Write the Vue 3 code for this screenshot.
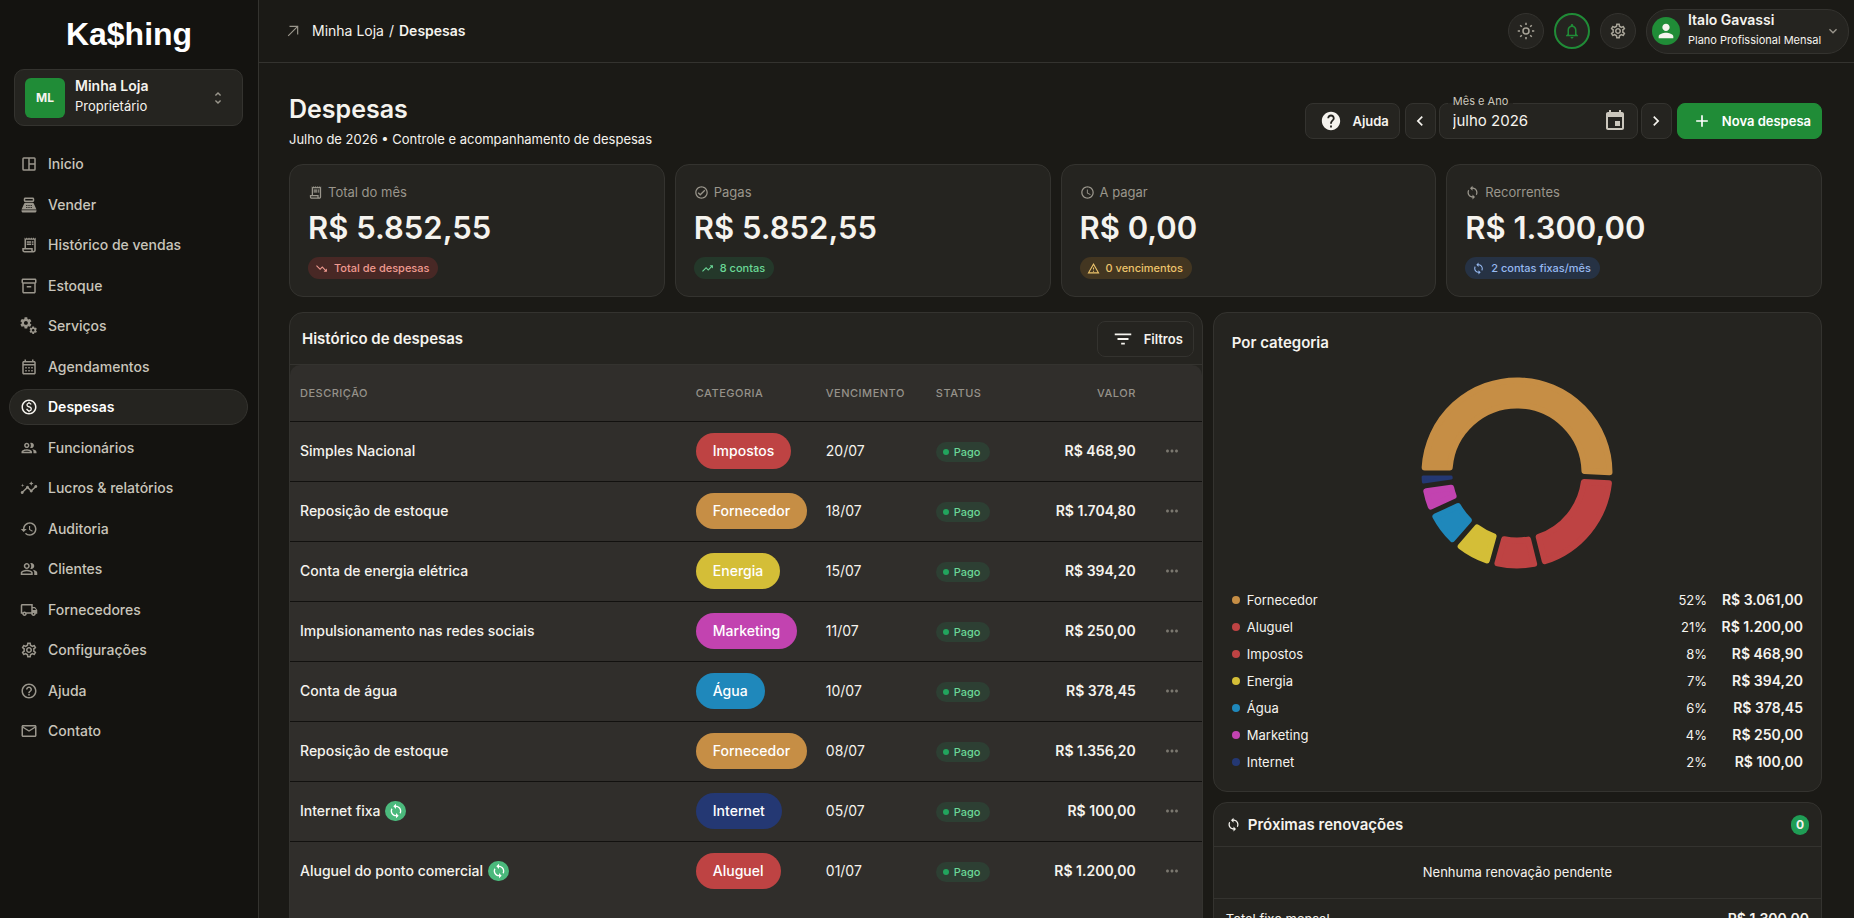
<template>
  <div class="layout">
    <aside class="sidebar">
      <a class="logo" href="#">Ka$hing</a>

      <button class="store" type="button">
        <span class="store-avatar">ML</span>
        <span class="store-info">
          <strong>Minha Loja</strong>
          <span>Proprietário</span>
        </span>
        <Icon name="unfold" :size="16" class="muted" />
      </button>

      <nav class="menu">
        <a
          v-for="item in menu"
          :key="item.label"
          href="#"
          class="menu-item"
          :class="{ active: item.active }"
        >
          <Icon :name="item.icon" :size="18" />
          <span>{{ item.label }}</span>
        </a>
      </nav>
    </aside>

    <div class="main">
      <header class="topbar">
        <div class="breadcrumb">
          <Icon name="arrow" :size="14" class="muted" />
          <div class="crumbs">
            <a href="#">Minha Loja</a>
            <span>/</span>
            <strong>Despesas</strong>
          </div>
        </div>

        <div class="topbar-actions">
          <button class="round" type="button" aria-label="Tema"><Icon name="sun" :size="18" /></button>
          <button class="round notify" type="button" aria-label="Notificações"><Icon name="bell" :size="18" /></button>
          <button class="round" type="button" aria-label="Configurações"><Icon name="gear" :size="18" /></button>
          <button class="user" type="button">
            <span class="user-avatar"><Icon name="person" :size="22" /></span>
            <span class="user-info">
              <strong>Italo Gavassi</strong>
              <span>Plano Profissional Mensal</span>
            </span>
            <Icon name="down" :size="16" class="muted" />
          </button>
        </div>
      </header>

      <main class="content">
        <section class="page-head">
          <div>
            <h1>Despesas</h1>
            <p>Julho de 2026 • Controle e acompanhamento de despesas</p>
          </div>

          <div class="toolbar">
            <button class="btn" type="button">
              <Icon name="helpFilled" :size="22" />
              Ajuda
            </button>
            <div class="month">
              <button class="btn step" type="button" aria-label="Mês anterior"><Icon name="left" :size="20" /></button>
              <div class="month-field">
                <label for="month">Mês e Ano</label>
                <input id="month" v-model="month" type="text" />
                <Icon name="event" :size="24" />
              </div>
              <button class="btn step" type="button" aria-label="Próximo mês"><Icon name="right" :size="20" /></button>
            </div>
            <button class="btn primary" type="button">
              <Icon name="add" :size="20" />
              Nova despesa
            </button>
          </div>
        </section>

        <section class="stats">
          <article v-for="stat in stats" :key="stat.label" class="card stat">
            <div class="stat-label">
              <Icon :name="stat.icon" :size="15" />
              <span>{{ stat.label }}</span>
            </div>
            <div class="stat-value">{{ stat.value }}</div>
            <span class="badge" :class="stat.tone">
              <Icon :name="stat.badgeIcon" :size="13" />
              {{ stat.badge }}
            </span>
          </article>
        </section>

        <section class="columns">
          <div class="card history">
            <div class="card-head">
              <h2>Histórico de despesas</h2>
              <button class="btn filter" type="button">
                <Icon name="filter" :size="22" />
                Filtros
              </button>
            </div>

            <div class="table-wrap">
              <table>
                <colgroup>
                  <col />
                  <col class="col-category" />
                  <col class="col-due" />
                  <col class="col-status" />
                  <col class="col-value" />
                  <col class="col-menu" />
                </colgroup>
                <thead>
                  <tr>
                    <th>Descrição</th>
                    <th>Categoria</th>
                    <th>Vencimento</th>
                    <th>Status</th>
                    <th class="right">Valor</th>
                    <th></th>
                  </tr>
                </thead>
                <tbody>
                  <tr v-for="(row, i) in expenses" :key="i">
                    <td>
                      <div class="desc">
                        {{ row.name }}
                        <span v-if="row.fixed" class="fixed"><Icon name="sync" :size="16" /></span>
                      </div>
                    </td>
                    <td><span class="chip" :style="{ background: colors[row.category] }">{{ row.category }}</span></td>
                    <td class="due">{{ row.due }}</td>
                    <td><span class="status"><i></i>Pago</span></td>
                    <td class="right value">{{ row.value }}</td>
                    <td class="menu-cell">
                      <button class="more" type="button" aria-label="Ações"><Icon name="more" :size="18" /></button>
                    </td>
                  </tr>
                </tbody>
              </table>
            </div>
          </div>

          <div class="side">
            <div class="card categories">
              <h2>Por categoria</h2>
              <svg class="donut" viewBox="0 0 200 200" aria-hidden="true">
                <path
                  v-for="slice in slices"
                  :key="slice.name"
                  :d="slice.d"
                  :fill="slice.color"
                  :stroke="slice.color"
                  :stroke-width="slice.corner * 2"
                  stroke-linejoin="round"
                />
              </svg>
              <ul class="legend">
                <li v-for="cat in categories" :key="cat.name">
                  <i :style="{ background: colors[cat.name] }"></i>
                  <span class="legend-name">{{ cat.name }}</span>
                  <span>{{ cat.percent }}</span>
                  <strong>{{ cat.value }}</strong>
                </li>
              </ul>
            </div>

            <div class="card renewals">
              <div class="renewals-head">
                <Icon name="sync" :size="15" />
                <h2>Próximas renovações</h2>
                <span class="count">0</span>
              </div>
              <p class="empty">Nenhuma renovação pendente</p>
              <div class="renewals-total">
                <span>Total fixo mensal</span>
                <strong>R$ 1.300,00</strong>
              </div>
            </div>
          </div>
        </section>
      </main>
    </div>
  </div>
</template>

<script setup>
import { computed, h, ref } from 'vue';

const gearOuter = 'M19.43 12.98c.04-.32.07-.64.07-.98 0-.34-.03-.66-.07-.98l2.11-1.65c.19-.15.24-.42.12-.64l-2-3.46c-.09-.16-.26-.25-.44-.25-.06 0-.12.01-.17.03l-2.49 1c-.52-.4-1.08-.73-1.69-.98l-.38-2.65C14.46 2.18 14.25 2 14 2h-4c-.25 0-.46.18-.49.42l-.38 2.65c-.61.25-1.17.59-1.69.98l-2.49-1c-.06-.02-.12-.03-.18-.03-.17 0-.34.09-.43.25l-2 3.46c-.13.22-.07.49.12.64l2.11 1.65c-.04.32-.07.65-.07.98 0 .33.03.66.07.98l-2.11 1.65c-.19.15-.24.42-.12.64l2 3.46c.09.16.26.25.44.25.06 0 .12-.01.17-.03l2.49-1c.52.4 1.08.73 1.69.98l.38 2.65c.03.24.24.42.49.42h4c.25 0 .46-.18.49-.42l.38-2.65c.61-.25 1.17-.59 1.69-.98l2.49 1c.06.02.12.03.18.03.17 0 .34-.09.43-.25l2-3.46c.12-.22.07-.49-.12-.64l-2.11-1.65z';
const gearSolid = gearOuter + 'M12 15.5c-1.93 0-3.5-1.57-3.5-3.5s1.57-3.5 3.5-3.5 3.5 1.57 3.5 3.5-1.57 3.5-3.5 3.5z';
const ring = 'M12 2C6.48 2 2 6.48 2 12s4.48 10 10 10 10-4.48 10-10S17.52 2 12 2zm0 18c-4.41 0-8-3.59-8-8s3.59-8 8-8 8 3.59 8 8-3.59 8-8 8z';

const icons = {
  dashboard: 'M5 3h14a2 2 0 0 1 2 2v14a2 2 0 0 1-2 2H5a2 2 0 0 1-2-2V5a2 2 0 0 1 2-2zM5 5v14h6V5zM13 5v6h6V5zM13 13v6h6v-6z',
  register: 'M17 2H7c-1.1 0-2 .9-2 2v2c0 1.1.9 2 2 2h10c1.1 0 2-.9 2-2V4c0-1.1-.9-2-2-2zm0 4H7V4h10v2zm3 16H4c-1.1 0-2-.9-2-2v-1h20v1c0 1.1-.9 2-2 2zm-1.47-11.81C18.21 9.47 17.49 9 16.7 9H7.3c-.79 0-1.51.47-1.83 1.19L2 18h20l-3.47-7.81zM8 12h2v1H8zM11 12h2v1h-2zM14 12h2v1h-2zM8 15h2v1H8zM11 15h2v1h-2zM14 15h2v1h-2z',
  receipt: 'M19.5 3.5 18 2l-1.5 1.5L15 2l-1.5 1.5L12 2l-1.5 1.5L9 2 7.5 3.5 6 2v14H3v3c0 1.66 1.34 3 3 3h12c1.66 0 3-1.34 3-3V2l-1.5 1.5zM15 20H6c-.55 0-1-.45-1-1v-1h10v2zm4-1c0 .55-.45 1-1 1s-1-.45-1-1v-3H8V5h11v14zM9 7h6v2H9zM16 7h2v2h-2zM9 10h6v2H9zM16 10h2v2h-2z',
  box: 'M20 2H4c-1 0-2 .9-2 2v3.01c0 .72.43 1.34 1 1.69V20c0 1.1 1.1 2 2 2h14c.9 0 2-.9 2-2V8.7c.57-.35 1-.97 1-1.69V4c0-1.1-1-2-2-2zm-1 18H5V9h14v11zm1-13H4V4h16v3zM9 12h6v2H9z',
  services: [
    [gearSolid, 'translate(-1 -1) scale(.74)'],
    [gearSolid, 'translate(11.6 11.6) scale(.5)']
  ],
  calendar: 'M19 4h-1V2h-2v2H8V2H6v2H5c-1.11 0-1.99.9-1.99 2L3 20c0 1.1.89 2 2 2h14c1.1 0 2-.9 2-2V6c0-1.1-.9-2-2-2zm0 16H5V10h14v10zm0-12H5V6h14v2zM7 12h2v2H7zM11 12h2v2h-2zM15 12h2v2h-2zM7 16h2v2H7zM11 16h2v2h-2zM15 16h2v2h-2z',
  money: ring + 'M12.89 11.1c-1.78-.59-2.64-.96-2.64-1.9 0-1.02 1.11-1.39 1.81-1.39 1.31 0 1.79.99 1.9 1.34l1.58-.67c-.15-.44-.82-1.91-2.66-2.23V5h-1.75v1.26c-2.6.56-2.62 2.85-2.62 2.96 0 2.27 2.25 2.91 3.35 3.31 1.58.56 2.28 1.07 2.28 2.03 0 1.13-1.05 1.61-1.98 1.61-1.82 0-2.34-1.87-2.4-2.09l-1.66.67c.63 2.19 2.28 2.78 3.02 2.96V19h1.75v-1.24c.52-.09 3.02-.59 3.02-3.22.01-1.39-.6-2.61-3-3.44z',
  staff: 'M9 13.75c-2.34 0-7 1.17-7 3.5V19h14v-1.75c0-2.33-4.66-3.5-7-3.5zM4.34 17c.84-.58 2.87-1.25 4.66-1.25s3.82.67 4.66 1.25H4.34zM9 12c1.93 0 3.5-1.57 3.5-3.5S10.93 5 9 5 5.5 6.57 5.5 8.5 7.07 12 9 12zm0-5c.83 0 1.5.67 1.5 1.5S9.83 10 9 10s-1.5-.67-1.5-1.5S8.17 7 9 7zm7.04 6.81c1.16.84 1.96 1.96 1.96 3.44V19h4v-1.75c0-2.02-3.5-3.17-5.96-3.44zM15 12c1.93 0 3.5-1.57 3.5-3.5S16.93 5 15 5c-.54 0-1.04.13-1.5.35.63.89 1 1.98 1 3.15s-.37 2.26-1 3.15c.46.22.96.35 1.5.35z',
  insights: 'M21 8c-1.45 0-2.26 1.44-1.93 2.51l-3.55 3.56c-.3-.09-.74-.09-1.04 0l-2.55-2.55C12.27 10.45 11.46 9 10 9c-1.45 0-2.27 1.44-1.93 2.52l-4.56 4.55C2.44 15.74 1 16.55 1 18c0 1.1.9 2 2 2 1.45 0 2.26-1.44 1.93-2.51l4.55-4.56c.3.09.74.09 1.04 0l2.55 2.55C12.73 16.55 13.54 18 15 18c1.45 0 2.27-1.44 1.93-2.52l3.56-3.55C21.56 12.26 23 11.45 23 10c0-1.1-.9-2-2-2zM15 9l.94-2.07L18 6l-2.06-.93L15 3l-.92 2.07L12 6l2.08.93zM3.5 11 4 9l2-.5L4 8l-.5-2L3 8l-2 .5L3 9z',
  history: 'M13 3c-4.97 0-9 4.03-9 9H1l3.89 3.89.07.14L9 12H6c0-3.87 3.13-7 7-7s7 3.13 7 7-3.13 7-7 7c-1.93 0-3.68-.79-4.94-2.06l-1.42 1.42C8.27 19.99 10.51 21 13 21c4.97 0 9-4.03 9-9s-4.03-9-9-9zm-1 5v5l4.28 2.54.72-1.21-3.5-2.08V8H12z',
  people: 'M16.67 13.13C18.04 14.06 19 15.32 19 17v3h4v-3c0-2.18-3.57-3.47-6.33-3.87zM15 12c2.21 0 4-1.79 4-4s-1.79-4-4-4c-.47 0-.91.1-1.33.24C14.5 5.27 15 6.58 15 8s-.5 2.73-1.33 3.76c.42.14.86.24 1.33.24zM9 12c2.21 0 4-1.79 4-4s-1.79-4-4-4-4 1.79-4 4 1.79 4 4 4zm0-6c1.1 0 2 .9 2 2s-.9 2-2 2-2-.9-2-2 .9-2 2-2zm0 7c-2.67 0-8 1.34-8 4v3h16v-3c0-2.66-5.33-4-8-4zm6 5H3v-.99C3.2 16.29 6.3 15 9 15s5.8 1.29 6 2v1z',
  truck: 'M20 8h-3V4H3c-1.1 0-2 .9-2 2v11h2c0 1.66 1.34 3 3 3s3-1.34 3-3h6c0 1.66 1.34 3 3 3s3-1.34 3-3h2v-5l-3-4zm-.5 1.5 1.96 2.5H17V9.5h2.5zM6 18c-.55 0-1-.45-1-1s.45-1 1-1 1 .45 1 1-.45 1-1 1zm2.22-3c-.55-.61-1.33-1-2.22-1s-1.67.39-2.22 1H3V6h12v9H8.22zM18 18c-.55 0-1-.45-1-1s.45-1 1-1 1 .45 1 1-.45 1-1 1z',
  gear: gearOuter + 'M17.45 11.27c.04.31.05.52.05.73 0 .21-.02.43-.05.73l-.14 1.13.89.7 1.08.84-.7 1.21-1.27-.51-1.04-.42-.9.68c-.43.32-.84.56-1.25.73l-1.06.43-.16 1.13-.2 1.35h-1.4l-.19-1.35-.16-1.13-1.06-.43c-.43-.18-.83-.41-1.23-.71l-.91-.7-1.06.43-1.27.51-.7-1.21 1.08-.84.89-.7-.14-1.13c-.03-.31-.05-.54-.05-.74s.02-.43.05-.73l.14-1.13-.89-.7-1.08-.84.7-1.21 1.27.51 1.04.42.9-.68c.43-.32.84-.56 1.25-.73l1.06-.43.16-1.13.2-1.35h1.39l.19 1.35.16 1.13 1.06.43c.43.18.83.41 1.23.71l.91.7 1.06-.43 1.27-.51.7 1.21-1.07.85-.89.7.14 1.13zM12 8c-2.21 0-4 1.79-4 4s1.79 4 4 4 4-1.79 4-4-1.79-4-4-4zm0 6c-1.1 0-2-.9-2-2s.9-2 2-2 2 .9 2 2-.9 2-2 2z',
  help: ring + 'M11 18h2v-2h-2v2zM12 6c-2.21 0-4 1.79-4 4h2c0-1.1.9-2 2-2s2 .9 2 2c0 2-3 1.75-3 5h2c0-2.25 3-2.5 3-5 0-2.21-1.79-4-4-4z',
  mail: 'M20 4H4c-1.1 0-2 .9-2 2v12c0 1.1.9 2 2 2h16c1.1 0 2-.9 2-2V6c0-1.1-.9-2-2-2zm0 14H4V8l8 5 8-5v10zm-8-7L4 6h16l-8 5z',
  arrow: 'M6 3v2h11.6L3 19.6 4.4 21 19 6.4V18h2V3z',
  sun: 'M12 7a5 5 0 1 0 0 10 5 5 0 0 0 0-10zM12 9a3 3 0 1 1 0 6 3 3 0 0 1 0-6zM11 1h2v3h-2zM11 20h2v3h-2zM1 11h3v2H1zM20 11h3v2h-3zM5 3.6 7.1 5.7 5.7 7.1 3.6 5zM19 3.6 20.4 5l-2.1 2.1-1.4-1.4zM5.7 16.9l1.4 1.4L5 20.4 3.6 19zM18.3 16.9l2.1 2.1-1.4 1.4-2.1-2.1z',
  bell: 'M12 22c1.1 0 2-.9 2-2h-4c0 1.1.9 2 2 2zm6-6v-5c0-3.07-1.63-5.64-4.5-6.32V4c0-.83-.67-1.5-1.5-1.5s-1.5.67-1.5 1.5v.68C7.64 5.36 6 7.92 6 11v5l-2 2v1h16v-1l-2-2zm-2 1H8v-6c0-2.48 1.51-4.5 4-4.5s4 2.02 4 4.5v6z',
  person: 'M12 12c2.21 0 4-1.79 4-4s-1.79-4-4-4-4 1.79-4 4 1.79 4 4 4zm0 2c-2.67 0-8 1.34-8 4v2h16v-2c0-2.66-5.33-4-8-4z',
  down: 'M16.59 8.59 12 13.17 7.41 8.59 6 10l6 6 6-6z',
  unfold: 'M12 5.83 15.17 9l1.41-1.41L12 3 7.41 7.59 8.83 9 12 5.83zm0 12.34L8.83 15l-1.41 1.41L12 21l4.59-4.59L15.17 15 12 18.17z',
  sync: 'M12 4V1L8 5l4 4V6c3.31 0 6 2.69 6 6 0 1.01-.25 1.97-.7 2.8l1.46 1.46C19.54 15.03 20 13.57 20 12c0-4.42-3.58-8-8-8zm0 14c-3.31 0-6-2.69-6-6 0-1.01.25-1.97.7-2.8L5.24 7.74C4.46 8.97 4 10.43 4 12c0 4.42 3.58 8 8 8v3l4-4-4-4v3z',
  event: 'M17 12h-5v5h5v-5zM16 1v2H8V1H6v2H5c-1.11 0-1.99.9-1.99 2L3 19c0 1.1.89 2 2 2h14c1.1 0 2-.9 2-2V5c0-1.1-.9-2-2-2h-1V1h-2zm3 18H5V8h14v11z',
  add: 'M19 13h-6v6h-2v-6H5v-2h6V5h2v6h6v2z',
  filter: 'M10 18h4v-2h-4v2zM3 6v2h18V6H3zm3 7h12v-2H6v2z',
  more: 'M6 10c-1.1 0-2 .9-2 2s.9 2 2 2 2-.9 2-2-.9-2-2-2zm12 0c-1.1 0-2 .9-2 2s.9 2 2 2 2-.9 2-2-.9-2-2-2zm-6 0c-1.1 0-2 .9-2 2s.9 2 2 2 2-.9 2-2-.9-2-2-2z',
  trendUp: 'M16 6l2.29 2.29-4.88 4.88-4-4L2 16.59 3.41 18l6-6 4 4 6.3-6.29L22 12V6z',
  trendDown: 'M16 18l2.29-2.29-4.88-4.88-4 4L2 7.41 3.41 6l6 6 4-4 6.3 6.29L22 12v6z',
  check: ring + 'M16.59 7.58 10 14.17l-2.59-2.58L6 13l4 4 8-8z',
  clock: ring + 'M12.5 7H11v6l5.25 3.15.75-1.23-4.5-2.67z',
  warning: 'M12 2 1 21h22zM12 6l7.5 13h-15zM11 16h2v2h-2zM11 10h2v4h-2z',
  helpFilled: 'M12 2C6.48 2 2 6.48 2 12s4.48 10 10 10 10-4.48 10-10S17.52 2 12 2zm1 17h-2v-2h2v2zm2.07-7.75-.9.92C13.45 12.9 13 13.5 13 15h-2v-.5c0-1.1.45-2.1 1.17-2.83l1.24-1.26c.37-.36.59-.86.59-1.41 0-1.1-.9-2-2-2s-2 .9-2 2H8c0-2.21 1.79-4 4-4s4 1.79 4 4c0 .88-.36 1.68-.93 2.25z',
  left: 'M15.41 7.41 14 6l-6 6 6 6 1.41-1.41L10.83 12z',
  right: 'M10 6 8.59 7.41 13.17 12l-4.58 4.59L10 18l6-6z'
};

const Icon = ({ name, size }) => {
  const shapes = Array.isArray(icons[name]) ? icons[name] : [[icons[name]]];
  return h(
    'svg',
    { class: 'icon', width: size, height: size, viewBox: '0 0 24 24', fill: 'currentColor', 'fill-rule': 'evenodd', 'aria-hidden': 'true' },
    shapes.map(([d, transform]) => h('path', { d, transform }))
  );
};
Icon.props = ['name', 'size'];

const month = ref('julho 2026');

const menu = [
  { label: 'Inicio', icon: 'dashboard' },
  { label: 'Vender', icon: 'register' },
  { label: 'Histórico de vendas', icon: 'receipt' },
  { label: 'Estoque', icon: 'box' },
  { label: 'Serviços', icon: 'services' },
  { label: 'Agendamentos', icon: 'calendar' },
  { label: 'Despesas', icon: 'money', active: true },
  { label: 'Funcionários', icon: 'staff' },
  { label: 'Lucros & relatórios', icon: 'insights' },
  { label: 'Auditoria', icon: 'history' },
  { label: 'Clientes', icon: 'people' },
  { label: 'Fornecedores', icon: 'truck' },
  { label: 'Configurações', icon: 'gear' },
  { label: 'Ajuda', icon: 'help' },
  { label: 'Contato', icon: 'mail' }
];

const stats = [
  { label: 'Total do mês', icon: 'receipt', value: 'R$ 5.852,55', badge: 'Total de despesas', badgeIcon: 'trendDown', tone: 'red' },
  { label: 'Pagas', icon: 'check', value: 'R$ 5.852,55', badge: '8 contas', badgeIcon: 'trendUp', tone: 'green' },
  { label: 'A pagar', icon: 'clock', value: 'R$ 0,00', badge: '0 vencimentos', badgeIcon: 'warning', tone: 'amber' },
  { label: 'Recorrentes', icon: 'sync', value: 'R$ 1.300,00', badge: '2 contas fixas/mês', badgeIcon: 'sync', tone: 'blue' }
];

const colors = {
  Fornecedor: '#c68e45',
  Aluguel: '#be4343',
  Impostos: '#be4343',
  Energia: '#d4be37',
  'Água': '#1f88bb',
  Marketing: '#c243b0',
  Internet: '#243873'
};

const expenses = [
  { name: 'Simples Nacional', category: 'Impostos', due: '20/07', value: 'R$ 468,90' },
  { name: 'Reposição de estoque', category: 'Fornecedor', due: '18/07', value: 'R$ 1.704,80' },
  { name: 'Conta de energia elétrica', category: 'Energia', due: '15/07', value: 'R$ 394,20' },
  { name: 'Impulsionamento nas redes sociais', category: 'Marketing', due: '11/07', value: 'R$ 250,00' },
  { name: 'Conta de água', category: 'Água', due: '10/07', value: 'R$ 378,45' },
  { name: 'Reposição de estoque', category: 'Fornecedor', due: '08/07', value: 'R$ 1.356,20' },
  { name: 'Internet fixa', category: 'Internet', due: '05/07', value: 'R$ 100,00', fixed: true },
  { name: 'Aluguel do ponto comercial', category: 'Aluguel', due: '01/07', value: 'R$ 1.200,00', fixed: true }
];

const categories = [
  { name: 'Fornecedor', total: 3061, percent: '52%', value: 'R$ 3.061,00' },
  { name: 'Aluguel', total: 1200, percent: '21%', value: 'R$ 1.200,00' },
  { name: 'Impostos', total: 468.9, percent: '8%', value: 'R$ 468,90' },
  { name: 'Energia', total: 394.2, percent: '7%', value: 'R$ 394,20' },
  { name: 'Água', total: 378.45, percent: '6%', value: 'R$ 378,45' },
  { name: 'Marketing', total: 250, percent: '4%', value: 'R$ 250,00' },
  { name: 'Internet', total: 100, percent: '2%', value: 'R$ 100,00' }
];

// Donut starts at 9 o'clock and runs clockwise, slices are split by parallel gaps
const slices = computed(() => {
  const outer = 95.5;
  const inner = 64.5;
  const halfGap = 2.5;
  const pad = (2 * Math.PI) / 180;
  const sum = categories.reduce((acc, c) => acc + c.total, 0);
  const free = Math.PI * 2 - pad * categories.length;
  const point = (r, a) => `${(100 + r * Math.cos(a)).toFixed(2)} ${(100 + r * Math.sin(a)).toFixed(2)}`;
  let start = Math.PI;

  return categories.map((c) => {
    const sweep = (c.total / sum) * free + pad;
    const end = start + sweep;
    const corner = sweep < 0.2 ? 1.5 : 3;
    const ro = outer - corner;
    const ri = inner + corner;
    const oo = Math.asin((halfGap + corner) / ro);
    const oi = Math.asin((halfGap + corner) / ri);
    const large = sweep - oo * 2 > Math.PI ? 1 : 0;
    const largeIn = sweep - oi * 2 > Math.PI ? 1 : 0;
    const d = `M${point(ro, start + oo)}A${ro} ${ro} 0 ${large} 1 ${point(ro, end - oo)}L${point(ri, end - oi)}A${ri} ${ri} 0 ${largeIn} 0 ${point(ri, start + oi)}Z`;
    start = end;
    return { name: c.name, color: colors[c.name], d, corner };
  });
});
</script>

<style>
body {
  margin: 0;
  background: #1b1a16;
}
</style>

<style scoped>
* {
  box-sizing: border-box;
}

.layout {
  display: flex;
  height: 100vh;
  overflow: hidden;
  background: #1b1a16;
  color: #f5f3ee;
  font-family: Inter, "Liberation Sans", sans-serif;
  font-size: 14px;
  line-height: 20px;
}

button,
input {
  font: inherit;
  color: inherit;
}

button {
  cursor: pointer;
}

a {
  color: inherit;
  text-decoration: none;
}

h1,
h2,
p,
ul {
  margin: 0;
  padding: 0;
}

strong,
h2 {
  font-weight: 600;
}

.icon {
  display: block;
  flex-shrink: 0;
}

.muted {
  color: #9a968c;
}

/* sidebar */
.sidebar {
  flex: 0 0 259px;
  border-right: 1px solid #34332f;
  background: #141310;
}

.logo {
  display: block;
  padding: 14px 0 15px;
  color: #fff;
  font-family: "Liberation Sans", sans-serif;
  font-size: 32px;
  font-weight: 700;
  line-height: 40px;
  text-align: center;
}

.store {
  display: flex;
  align-items: center;
  gap: 10px;
  width: 229px;
  height: 57px;
  margin: 0 14px;
  padding: 0 16px 0 10px;
  border: 1px solid #34332f;
  border-radius: 10px;
  background: #252420;
  text-align: left;
}

.store-avatar {
  display: grid;
  place-items: center;
  width: 40px;
  height: 40px;
  border-radius: 6px;
  background: #208c37;
  font-size: 12px;
  font-weight: 700;
}

.store-info {
  display: flex;
  flex: 1;
  flex-direction: column;
  padding-bottom: 3px;
  font-size: 13px;
}

.store-info strong {
  font-size: 14px;
}

.menu {
  display: flex;
  flex-direction: column;
  justify-content: space-between;
  height: 603px;
  margin: 20px 10px 0 9px;
}

.menu-item {
  display: flex;
  align-items: center;
  gap: 10px;
  height: 36px;
  padding: 0 10px;
  border: 1px solid transparent;
  border-radius: 18px;
  color: #c9c5bb;
  font-weight: 500;
}

.menu-item .icon {
  color: #9a968c;
}

.menu-item.active {
  border-color: #34332f;
  background: #252420;
  color: #fff;
  font-weight: 600;
}

.menu-item.active .icon {
  color: #f5f3ee;
}

/* topbar */
.main {
  flex: 1;
  min-width: 0;
}

.topbar {
  display: flex;
  align-items: center;
  justify-content: space-between;
  height: 63px;
  padding: 0 5px 0 27px;
  border-bottom: 1px solid #34332f;
}

.breadcrumb {
  display: flex;
  align-items: center;
  gap: 12px;
}

.crumbs {
  display: flex;
  gap: 5px;
}

.topbar-actions {
  display: flex;
  align-items: center;
  gap: 10px;
}

.round {
  display: grid;
  place-items: center;
  width: 36px;
  height: 36px;
  padding: 0;
  border: 1px solid #34332f;
  border-radius: 50%;
  background: #252420;
  color: #a8a498;
}

.notify {
  border: 2px solid #208c37;
  color: #208c37;
}

.user {
  display: flex;
  align-items: center;
  gap: 8px;
  width: 203px;
  height: 45px;
  padding: 0 7px 0 5px;
  border: 1px solid #34332f;
  border-radius: 22px;
  background: #252420;
  text-align: left;
  white-space: nowrap;
}

.user-avatar {
  display: grid;
  flex-shrink: 0;
  place-items: center;
  width: 28px;
  height: 28px;
  border-radius: 50%;
  background: #208c37;
}

.user-info {
  display: flex;
  flex: 1;
  flex-direction: column;
  min-width: 0;
  padding-bottom: 3px;
  font-size: 11px;
}

.user-info strong {
  font-size: 14px;
}

/* page head */
.content {
  padding: 31px 32px 0 30px;
}

.page-head {
  display: flex;
  align-items: flex-start;
  justify-content: space-between;
}

h1 {
  font-size: 25px;
  font-weight: 600;
  line-height: 30px;
}

.page-head p {
  padding: 5px 0 15px;
  font-size: 13px;
}

.toolbar {
  display: flex;
  gap: 5px;
  padding-top: 9px;
}

.month {
  display: flex;
  gap: 3px;
}

.btn {
  display: flex;
  align-items: center;
  gap: 10px;
  height: 36px;
  padding: 0 10px 0 14px;
  border: 1px solid #34332f;
  border-radius: 8px;
  background: #252420;
  font-size: 13px;
  font-weight: 600;
  white-space: nowrap;
}

.btn.step {
  justify-content: center;
  width: 31px;
  padding: 0;
}

.btn.primary {
  border-color: #208c37;
  background: #208c37;
  color: #fff;
}

.month-field {
  position: relative;
  display: flex;
  align-items: center;
  width: 199px;
  height: 36px;
  padding: 0 10px 0 13px;
  border: 1px solid #34332f;
  border-radius: 8px;
  background: #252420;
  color: #cbc7bd;
}

.month-field label {
  position: absolute;
  top: -11px;
  left: 8px;
  padding: 0 5px;
  background: linear-gradient(#1b1a16 60%, #252420 60%);
  font-size: 11px;
  line-height: 16px;
}

.month-field input {
  flex: 1;
  min-width: 0;
  padding: 0;
  border: 0;
  outline: 0;
  background: none;
  color: #f5f3ee;
  font-size: 15px;
}

/* cards */
.card {
  border: 1px solid #34332f;
  border-radius: 14px;
  background: #252420;
}

.stats {
  display: grid;
  grid-template-columns: repeat(4, 1fr);
  gap: 10px;
  margin-bottom: 15px;
}

.stat {
  display: flex;
  flex-direction: column;
  align-items: flex-start;
  height: 133px;
  padding: 17px 18px;
}

.stat-label {
  display: flex;
  align-items: center;
  gap: 5px;
  color: #9a968c;
  font-size: 13px;
}

.stat-value {
  padding: 6px 0 9px;
  font-size: 31px;
  font-weight: 600;
  line-height: 40px;
}

.badge {
  display: flex;
  align-items: center;
  gap: 6px;
  height: 22px;
  padding: 0 9px 0 7px;
  border-radius: 11px;
  font-size: 11px;
  font-weight: 500;
}

.badge.red {
  background: #482825;
  color: #f09a90;
}

.badge.green {
  background: #24382a;
  color: #6bd897;
}

.badge.amber {
  background: #433621;
  color: #edc46c;
}

.badge.blue {
  background: #263244;
  color: #96b9f0;
}

.columns {
  display: grid;
  grid-template-columns: 3fr 2fr;
  gap: 10px;
  align-items: start;
}

h2 {
  font-size: 15px;
  line-height: 20px;
}

.history {
  overflow: hidden;
}

.card-head {
  display: flex;
  align-items: center;
  justify-content: space-between;
  height: 52px;
  padding: 0 8px 0 12px;
  border-bottom: 1px solid #34332f;
}

.table-wrap {
  padding-bottom: 48px;
  border-radius: 10px 10px 0 0;
  background: #302e2b;
}

table {
  width: 100%;
  border-collapse: collapse;
  table-layout: fixed;
}

.col-category {
  width: 130px;
}

.col-due,
.col-status,
.col-value {
  width: 110px;
}

.col-menu {
  width: 56px;
}

th,
td {
  padding: 0 10px;
  text-align: left;
  white-space: nowrap;
}

th {
  height: 56px;
  color: #96928a;
  font-size: 11px;
  font-weight: 500;
  letter-spacing: .5px;
  text-transform: uppercase;
}

td {
  height: 60px;
  border-top: 1px solid #12110f;
}

.right {
  text-align: right;
}

.value {
  font-weight: 600;
}

.desc {
  display: flex;
  align-items: center;
  gap: 5px;
  font-weight: 500;
}

.fixed {
  display: grid;
  place-items: center;
  width: 21px;
  height: 20px;
  border-radius: 10px;
  background: #4bb97c;
  color: #fff;
}

.chip {
  display: inline-block;
  height: 36px;
  padding: 0 17px;
  border-radius: 18px;
  color: #fff;
  font-weight: 500;
  line-height: 36px;
}

.status {
  display: inline-flex;
  align-items: center;
  gap: 5px;
  height: 20px;
  padding: 0 9px 0 7px;
  border-radius: 10px;
  background: #2d3f33;
  color: #6bd897;
  font-size: 11px;
  font-weight: 500;
  vertical-align: middle;
}

.status i {
  width: 6px;
  height: 6px;
  border-radius: 50%;
  background: #22a45d;
}

.more {
  display: block;
  padding: 7px;
  border: 0;
  background: none;
  color: #7a776f;
}

/* right column */
.side {
  display: grid;
  gap: 10px;
}

.categories {
  padding: 20px 18px 16px;
}

.donut {
  display: block;
  width: 200px;
  height: 200px;
  margin: 20px auto 13px;
}

.legend {
  display: grid;
  list-style: none;
  font-size: 13px;
}

.legend li {
  display: flex;
  align-items: center;
  gap: 7px;
  height: 27px;
}

.legend i {
  width: 8px;
  height: 8px;
  border-radius: 50%;
}

.legend-name {
  flex: 1;
}

.legend strong {
  min-width: 89px;
  font-size: 14px;
  text-align: right;
}

.renewals-head {
  display: flex;
  align-items: center;
  gap: 7px;
  height: 43px;
  padding: 0 12px;
}

.renewals-head h2 {
  flex: 1;
}

.count {
  min-width: 18px;
  height: 20px;
  border-radius: 9px;
  background: #1f9d55;
  font-size: 12px;
  font-weight: 700;
  text-align: center;
}

.empty {
  padding: 15px 0 16px;
  border-top: 1px solid #34332f;
  font-size: 13px;
  text-align: center;
}

.renewals-total {
  display: flex;
  justify-content: space-between;
  padding: 10px 12px;
  border-top: 1px solid #34332f;
  font-size: 13px;
}

.renewals-total strong {
  font-size: 14px;
}
</style>
